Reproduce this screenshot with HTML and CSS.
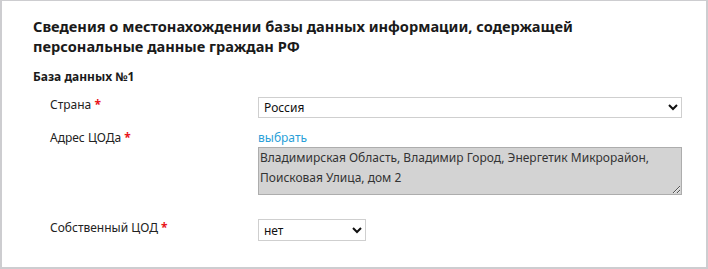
FILE: index.html
```html
<!DOCTYPE html>
<html lang="ru">
<head>
    <meta charset="UTF-8">
    <title>Сведения о местонахождении базы данных</title>
    <link rel="stylesheet" href="styles.css">
</head>
<body>
    <!-- Panel -->
    <div class="panel">
        <h2 class="panel-title">Сведения о местонахождении базы данных информации, содержащей персональные данные граждан РФ</h2>
        <h3 class="db-title">База данных №1</h3>

        <div class="form">
            <label class="form-label row-country">Страна <span class="req">*</span></label>
            <div class="form-control row-country">
                <select class="select select-wide">
                    <option>Россия</option>
                </select>
            </div>

            <label class="form-label row-address">Адрес ЦОДа <span class="req">*</span></label>
            <div class="form-control row-address">
                <a href="#" class="pick-link">выбрать</a>
                <textarea class="address" readonly>Владимирская Область, Владимир Город, Энергетик Микрорайон, Поисковая Улица, дом 2</textarea>
            </div>

            <label class="form-label row-own">Собственный ЦОД <span class="req">*</span></label>
            <div class="form-control row-own">
                <select class="select select-small">
                    <option>нет</option>
                </select>
            </div>
        </div>
    </div>
</body>
</html>
```

FILE: styles.css
```css
/* General Styles */
body {
    margin: 0;
    padding: 0;
    font-family: "Noto Sans", "Open Sans", sans-serif;
    color: #222;
    background: #fff;
}

/* Panel */
.panel {
    box-sizing: border-box;
    width: 708px;
    height: 269px;
    border: 2px solid #cdcdd0;
    border-top-width: 1px;
    padding: 15px 0 0 31px;
}

.panel-title {
    margin: 0;
    width: 640px;
    font-size: 14.6px;
    line-height: 20px;
    font-weight: bold;
    color: #1a1a1a;
}

.db-title {
    margin: 13px 0 0 0;
    font-size: 12px;
    line-height: 16px;
    font-weight: bold;
    color: #1a1a1a;
}

/* Form grid */
.form {
    display: grid;
    grid-template-columns: 208px 424px;
    margin: 11px 0 0 17px;
}

.form-label {
    font-size: 12px;
    line-height: 18px;
    color: #222;
}

.req {
    color: #e8141b;
    font-weight: bold;
}

.row-country.form-control {
    padding-top: 1px;
}

.row-address {
    padding-top: 11px;
}

.row-own {
    padding-top: 24px;
}

/* Selects */
.select {
    box-sizing: border-box;
    display: block;
    height: 21px;
    border: 1px solid #cfcfcf;
    border-radius: 0;
    background: #fff;
    font-family: inherit;
    font-size: 12px;
    color: #111;
    padding: 0 0 0 1px;
}

.select-wide {
    width: 424px;
}

.select-small {
    width: 108px;
    height: 22px;
}

/* Address */
.pick-link {
    display: block;
    font-size: 12px;
    line-height: 18px;
    color: #2a9fd8;
    text-decoration: none;
}

.address {
    box-sizing: border-box;
    display: block;
    width: 424px;
    height: 48px;
    margin: 0;
    border: 1px solid #adadad;
    background: #d3d3d3;
    font-family: inherit;
    font-size: 12px;
    line-height: 20px;
    color: #333;
    padding: 0 1px;
}
```
